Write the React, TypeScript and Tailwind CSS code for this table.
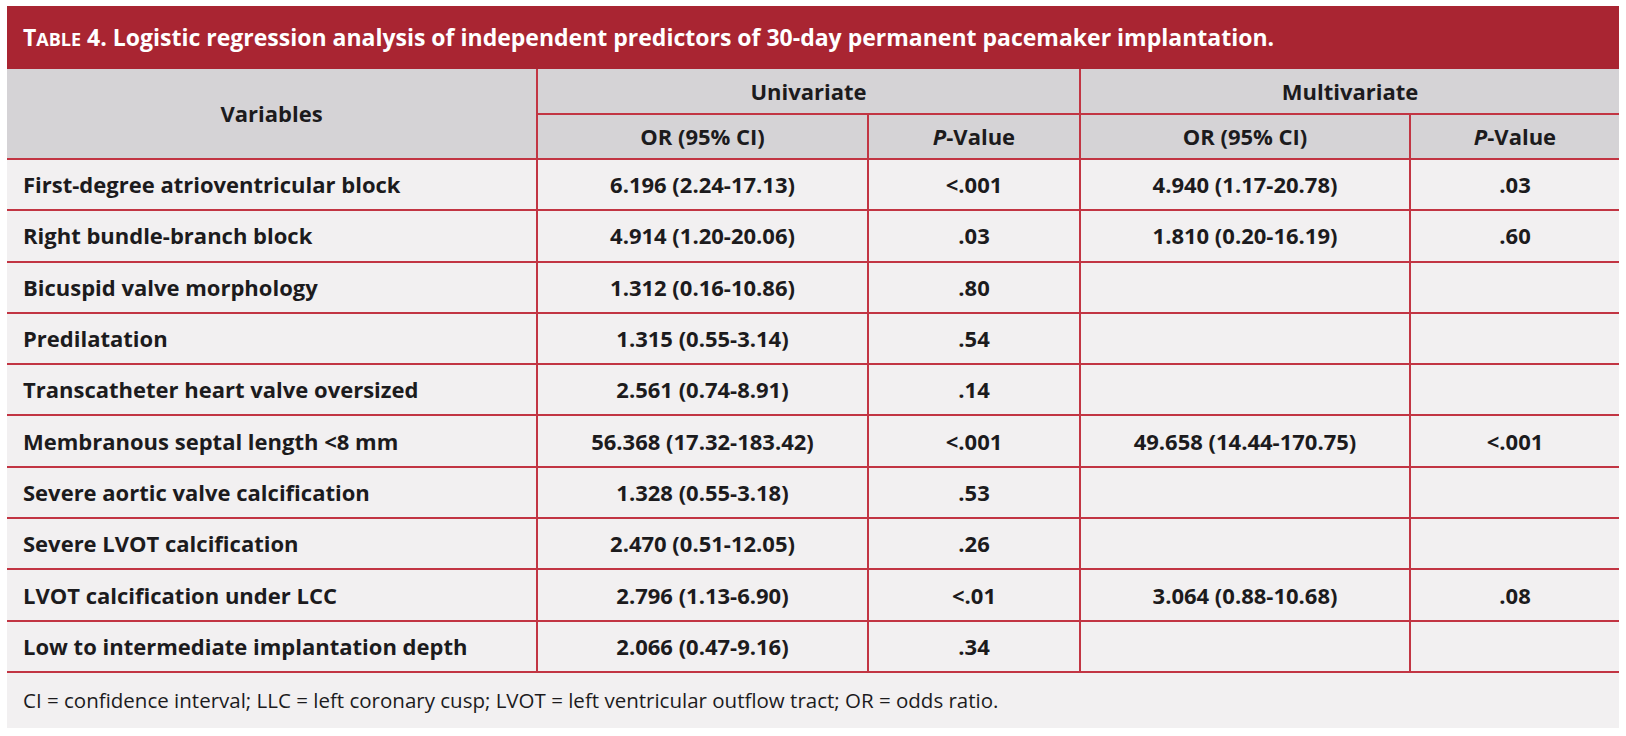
const rows = [
  ["First-degree atrioventricular block", "6.196 (2.24-17.13)", "<.001", "4.940 (1.17-20.78)", ".03"],
  ["Right bundle-branch block", "4.914 (1.20-20.06)", ".03", "1.810 (0.20-16.19)", ".60"],
  ["Bicuspid valve morphology", "1.312 (0.16-10.86)", ".80", "", ""],
  ["Predilatation", "1.315 (0.55-3.14)", ".54", "", ""],
  ["Transcatheter heart valve oversized", "2.561 (0.74-8.91)", ".14", "", ""],
  ["Membranous septal length <8 mm", "56.368 (17.32-183.42)", "<.001", "49.658 (14.44-170.75)", "<.001"],
  ["Severe aortic valve calcification", "1.328 (0.55-3.18)", ".53", "", ""],
  ["Severe LVOT calcification", "2.470 (0.51-12.05)", ".26", "", ""],
  ["LVOT calcification under LCC", "2.796 (1.13-6.90)", "<.01", "3.064 (0.88-10.68)", ".08"],
  ["Low to intermediate implantation depth", "2.066 (0.47-9.16)", ".34", "", ""],
];

const line = "border-[#c23543]";

export default function App() {
  return (
    <div className="min-h-screen bg-white pt-[6px] pl-[7px] font-['Open_Sans','Liberation_Sans',sans-serif] text-[#1c1b1d]">
      <div className="w-[1612px]">
        <div className="h-[63px] bg-[#a92532] flex items-center pl-4 text-white text-[23px] font-bold">
          <span>
            T<span className="text-[18px]">ABLE</span> 4. Logistic regression analysis of independent predictors of 30-day permanent pacemaker implantation.
          </span>
        </div>
        <table className="w-full border-collapse table-fixed text-[22px] font-bold">
          <colgroup>
            <col className="w-[530px]" />
            <col className="w-[331px]" />
            <col className="w-[212px]" />
            <col className="w-[330px]" />
            <col className="w-[209px]" />
          </colgroup>
          <thead className="bg-[#d5d3d6]">
            <tr className="h-[45px]">
              <th rowSpan={2} className={`border-b-2 border-r-2 ${line} font-bold`}>Variables</th>
              <th colSpan={2} className={`border-b-2 border-r-2 ${line} font-bold`}>Univariate</th>
              <th colSpan={2} className={`border-b-2 ${line} font-bold`}>Multivariate</th>
            </tr>
            <tr className="h-[45px]">
              <th className={`border-b-2 border-r-2 ${line} font-bold`}>OR (95% CI)</th>
              <th className={`border-b-2 border-r-2 ${line} font-bold`}><i>P</i>-Value</th>
              <th className={`border-b-2 border-r-2 ${line} font-bold`}>OR (95% CI)</th>
              <th className={`border-b-2 ${line} font-bold`}><i>P</i>-Value</th>
            </tr>
          </thead>
          <tbody className="bg-[#f2f0f1]">
            {rows.map((r, i) => (
              <tr key={i} className="h-[51.3px]">
                <td className={`border-b-2 border-r-2 ${line} pl-4 text-left`}>{r[0]}</td>
                <td className={`border-b-2 border-r-2 ${line} text-center`}>{r[1]}</td>
                <td className={`border-b-2 border-r-2 ${line} text-center`}>{r[2]}</td>
                <td className={`border-b-2 border-r-2 ${line} text-center`}>{r[3]}</td>
                <td className={`border-b-2 ${line} text-center`}>{r[4]}</td>
              </tr>
            ))}
          </tbody>
        </table>
        <div className="h-[55px] bg-[#f2f0f1] flex items-center pl-4 text-[20.5px]">
          CI = confidence interval; LLC = left coronary cusp; LVOT = left ventricular outflow tract; OR = odds ratio.
        </div>
      </div>
    </div>
  );
}
